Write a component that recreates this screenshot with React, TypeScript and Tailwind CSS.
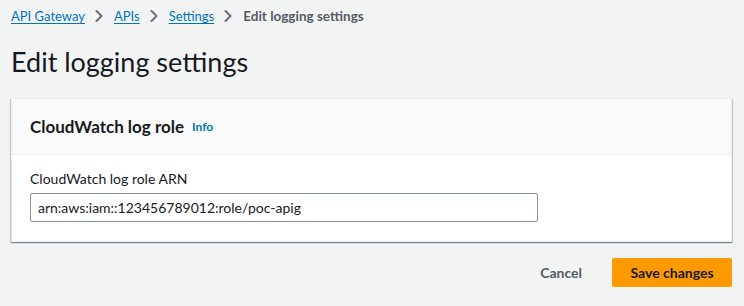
const crumbs = ['API Gateway', 'APIs', 'Settings']

function Chevron() {
  return (
    <svg className="mr-[11px] ml-[10px] h-[12px] w-[8px] text-[#687078]" viewBox="0 0 8 12" fill="none">
      <polyline points="1.5,1 6.5,6 1.5,11" stroke="currentColor" strokeWidth="2" strokeLinecap="round" strokeLinejoin="round" />
    </svg>
  )
}

export default function App() {
  return (
    <div className="min-h-[306px] w-[744px] bg-[#f2f3f3] pl-[11px] pr-[12px] pt-[5px] font-['Lato',sans-serif] text-[#16191f]">
      {/* Breadcrumbs */}
      <nav className="flex items-center text-[13px] leading-[22px]">
        {crumbs.map(c => (
          <span key={c} className="flex items-center">
            <a className="text-[#0073bb] underline underline-offset-2">{c}</a>
            <Chevron />
          </span>
        ))}
        <span className="text-[13.5px] font-bold text-[#545b64]">Edit logging settings</span>
      </nav>

      <h1 className="mt-[17px] text-[27px] leading-[36px] font-normal">Edit logging settings</h1>

      {/* Card */}
      <div className="mt-[18px] border border-[#eaeded] bg-white shadow-[0_1px_1px_0_rgba(0,28,36,0.3),1px_1px_1px_0_rgba(0,28,36,0.15),-1px_1px_1px_0_rgba(0,28,36,0.15)]">
        <div className="flex items-center border-b border-[#eaeded] bg-[#fafafa] px-[18px] pt-[17px] pb-[16px]">
          <h2 className="text-[17px] leading-[22px] font-bold">CloudWatch log role</h2>
          <a className="ml-[8px] text-[12px] font-bold text-[#0073bb]">Info</a>
        </div>
        <div className="px-[18px] pt-[13px] pb-[19px]">
          <label className="block text-[14px] leading-[22px]">CloudWatch log role ARN</label>
          <input
            className="mt-[3px] h-[29px] w-[508px] rounded-[2px] border border-[#879596] px-[7px] text-[14px] text-[#16191f] outline-none"
            defaultValue="arn:aws:iam::123456789012:role/poc-apig"
          />
        </div>
      </div>

      {/* Actions */}
      <div className="mt-[16px] flex items-center justify-end">
        <button className="px-[20px] text-[14px] font-bold text-[#545b64]">Cancel</button>
        <button className="ml-[10px] h-[29px] w-[120px] rounded-[2px] bg-[#ff9900] text-[14px] font-bold text-[#16191f]">
          Save changes
        </button>
      </div>
    </div>
  )
}
